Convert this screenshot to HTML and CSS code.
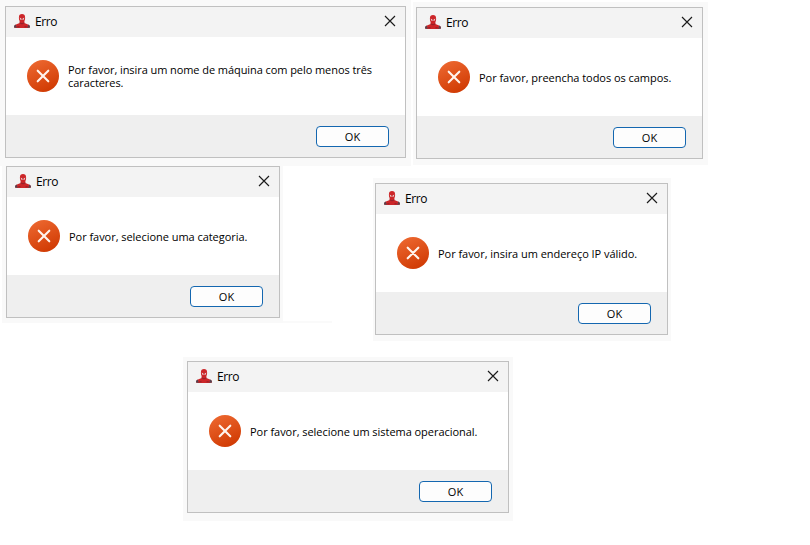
FILE: index.html
```html
<!DOCTYPE html>
<html lang="pt-BR">
<head>
<meta charset="utf-8">
<title>Erro</title>
<link rel="stylesheet" href="styles.css">
</head>
<body>
<svg class="defs" width="0" height="0" aria-hidden="true">
  <defs>
    <linearGradient id="orange" x1="0.2" y1="0" x2="0.65" y2="1"><stop offset="0" stop-color="#ed6830"/><stop offset="1" stop-color="#d03a03"/></linearGradient>
    <symbol id="hero" viewBox="0 0 16 14">
      <path d="M0 13.4C.1 11.6.9 10.6 2.6 10.2L5.6 9V7C5 6 4.9 4.800 4.900 3.400 4.900 1 6.100 0 8 0s3.100 1 3.100 3.400c0 1.400-.1 2.600-.7 3.600v2l3 1.200c1.700.4 2.500 1.400 2.600 3.200l-2 .6H2Z" fill="#cc2629"/>
      <path d="M0 13.400c.1-1.500.6-2.300 1.600-2.800l1.200 3.200H2ZM16 13.400c-.1-1.500-.6-2.300-1.600-2.800l-1.200 3.200h.8Z" fill="#55434f"/>
      <path d="M5.700 3.600 7.500 4.700v1.200L6.200 5.500ZM10.300 3.600 8.500 4.700v1.200l1.300-.4Z" fill="#e6dcdd"/>
      <path d="M5.700 8.800 8 9.900l2.300-1.100M3.200 12.800h2.300M10.500 12.800h2.300" fill="none" stroke="#74202a" stroke-width=".7"/>
    </symbol>
    <symbol id="close" viewBox="0 0 12 12"><path d="M1 1 11 11M11 1 1 11" fill="none" stroke="#1b1b1b" stroke-width="1.15"/></symbol>
    <symbol id="error" viewBox="0 0 32 32"><circle cx="16" cy="16" r="16" fill="url(#orange)"/><path d="m10.700 10.700 10.600 10.600M21.300 10.700 10.700 21.300" fill="none" stroke="#fff5ef" stroke-width="2.100" stroke-linecap="round"/></symbol>
  </defs>
</svg>
<main class="desktop">
  <div class="trace"></div>
  <section class="shade name"><div class="dialog">
    <header class="title"><svg class="hero"><use href="#hero"/></svg><span>Erro</span><svg class="close"><use href="#close"/></svg></header>
    <div class="content"><svg class="error"><use href="#error"/></svg><p>Por favor, insira um nome de máquina com pelo menos três<br>caracteres.</p></div>
    <footer><button>OK</button></footer>
  </div></section>
  <section class="shade fields"><div class="dialog">
    <header class="title"><svg class="hero"><use href="#hero"/></svg><span>Erro</span><svg class="close"><use href="#close"/></svg></header>
    <div class="content"><svg class="error"><use href="#error"/></svg><p>Por favor, preencha todos os campos.</p></div>
    <footer><button>OK</button></footer>
  </div></section>
  <section class="shade category"><div class="dialog">
    <header class="title"><svg class="hero"><use href="#hero"/></svg><span>Erro</span><svg class="close"><use href="#close"/></svg></header>
    <div class="content"><svg class="error"><use href="#error"/></svg><p>Por favor, selecione uma categoria.</p></div>
    <footer><button>OK</button></footer>
  </div></section>
  <section class="shade address"><div class="dialog">
    <header class="title"><svg class="hero"><use href="#hero"/></svg><span>Erro</span><svg class="close"><use href="#close"/></svg></header>
    <div class="content"><svg class="error"><use href="#error"/></svg><p>Por favor, insira um endereço IP válido.</p></div>
    <footer><button>OK</button></footer>
  </div></section>
  <section class="shade system"><div class="dialog">
    <header class="title"><svg class="hero"><use href="#hero"/></svg><span>Erro</span><svg class="close"><use href="#close"/></svg></header>
    <div class="content"><svg class="error"><use href="#error"/></svg><p>Por favor, selecione um sistema operacional.</p></div>
    <footer><button>OK</button></footer>
  </div></section>
</main>
</body>
</html>
```
FILE: styles.css
```css
* { box-sizing: border-box; }
body { margin: 0; background: #fff; color: #000; font-family: "Open Sans", "Noto Sans", sans-serif; }
.defs { position: absolute; }
.desktop { position: relative; width: 810px; height: 545px; overflow: hidden; }
.shade { position: absolute; background: #f9f9f9; }
.name { left: 0; top: 0; width: 411px; height: 166px; padding: 6px 5px 8px; }
.fields { left: 413px; top: 2px; width: 295px; height: 163px; padding: 5px 5px 6px 3px; }
.category { left: 2px; top: 166px; width: 281px; height: 157px; padding: 0 3px 5px 4px; }
.address { left: 373px; top: 178px; width: 298px; height: 163px; padding: 5px 3px 6px 2px; }
.system { left: 183px; top: 357px; width: 330px; height: 164px; padding: 4px 4px 7px; }
.trace { position: absolute; left: 283px; top: 321px; width: 49px; height: 2px; background: #fafafa; }
.dialog { height: 152px; border: 1px solid #c0c0c0; background: #fff; }
.title { display: flex; align-items: center; height: 30px; padding: 0 9px 0 8px; background: #f3f3f3; font-size: 12px; line-height: 16px; letter-spacing: -.45px; }
.title span { margin-left: 5px; flex: 1; }
.hero { width: 16px; height: 14px; margin-top: -2px; }
.close { width: 12px; height: 12px; margin-top: -2px; }
.content { display: flex; align-items: center; height: 78px; padding-left: 21px; }
.error { width: 32px; height: 32px; flex: none; }
p { margin: 1px 0 0 9px; font-size: 11px; line-height: 13px; letter-spacing: -.04px; white-space: nowrap; }
.name p { margin-top: 0; letter-spacing: -.07px; }
footer { display: flex; justify-content: flex-end; height: 42px; padding: 11px 16px 0 0; background: #efefef; }
button { width: 73px; height: 21px; padding: 0; border: 1px solid #1467b0; border-radius: 4px; background: #fdfdfd; color: #000; font: 11px/19px "Open Sans", sans-serif; }
```
